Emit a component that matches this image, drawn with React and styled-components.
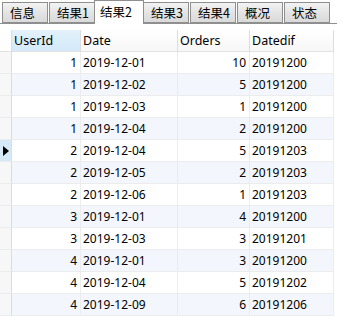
import React from "react";
import styled, { createGlobalStyle } from "styled-components";

const GlobalStyle = createGlobalStyle`
  body {
    margin: 0;
    background: #fff;
    font-family: "Noto Sans", "Noto Sans CJK SC", sans-serif;
  }
`;

const tabs = ["信息", "结果1", "结果2", "结果3", "结果4", "概况", "状态"];

const rows = [
  [1, "2019-12-01", 10, "20191200"],
  [1, "2019-12-02", 5, "20191200"],
  [1, "2019-12-03", 1, "20191200"],
  [1, "2019-12-04", 2, "20191200"],
  [2, "2019-12-04", 5, "20191203"],
  [2, "2019-12-05", 2, "20191203"],
  [2, "2019-12-06", 1, "20191203"],
  [3, "2019-12-01", 4, "20191200"],
  [3, "2019-12-03", 3, "20191201"],
  [4, "2019-12-01", 3, "20191200"],
  [4, "2019-12-04", 5, "20191202"],
  [4, "2019-12-09", 6, "20191206"],
];

const COLS = "12px 69px 97px 72px 84px";

export default function App() {
  return (
    <Page>
      <GlobalStyle />
      <TabBar>
        {tabs.map((t, i) => (
          <Tab key={t} active={i === 2}>
            {t}
          </Tab>
        ))}
      </TabBar>
      <Grid>
        <HeaderRow>
          <Indicator header />
          <HeadCell selected>UserId</HeadCell>
          <HeadCell>Date</HeadCell>
          <HeadCell>Orders</HeadCell>
          <HeadCell>Datedif</HeadCell>
        </HeaderRow>
        {rows.map((r, i) => (
          <Row key={i} alt={i % 2 === 1}>
            <Indicator current={i === 4}>{i === 4 && <Arrow />}</Indicator>
            <Cell right>{r[0]}</Cell>
            <Cell>{r[1]}</Cell>
            <Cell right>{r[2]}</Cell>
            <Cell>{r[3]}</Cell>
          </Row>
        ))}
      </Grid>
    </Page>
  );
}

const Page = styled.div`
  width: 348px;
  height: 323px;
  overflow: hidden;
  background: #fff;
`;

const TabBar = styled.div`
  display: flex;
  align-items: flex-end;
  gap: 1px;
  height: 24px;
  width: 337px;
  padding-left: 2px;
  box-sizing: border-box;
  border-bottom: 1px solid #8f8f8f;
`;

const Tab = styled.div`
  width: ${(p) => (p.active ? "50px" : "46px")};
  height: ${(p) => (p.active ? "24px" : "21px")};
  margin: ${(p) => (p.active ? "0 -2px -1px -2px" : "0")};
  box-sizing: border-box;
  border: 1px solid #8f8f8f;
  border-bottom: ${(p) => (p.active ? "none" : "1px solid #8f8f8f")};
  background: ${(p) =>
    p.active ? "#fff" : "linear-gradient(#f3f3f3, #e4e4e4 50%, #dadada)"};
  position: relative;
  z-index: ${(p) => (p.active ? 1 : 0)};
  font-family: "Noto Sans CJK SC", sans-serif;
  font-size: 12.5px;
  color: #000;
  line-height: 19px;
  padding: ${(p) => (p.active ? "1px 0 0 5px" : "0 0 0 7px")};
`;

const Grid = styled.div`
  margin-top: 6px;
  width: 334px;
  font-size: 12px;
  color: #000;
`;

const HeaderRow = styled.div`
  display: grid;
  grid-template-columns: ${COLS};
  height: 22px;
  font-size: 12.5px;
`;

const Row = styled.div`
  display: grid;
  grid-template-columns: ${COLS};
  height: 22px;
  background: ${(p) => (p.alt ? "#f3f6fc" : "#fff")};
`;

const Indicator = styled.div`
  box-sizing: border-box;
  border-right: 1px solid #dcdcdc;
  border-bottom: 1px solid ${(p) => (p.header ? "#e2e2e2" : "#ececec")};
  background: ${(p) =>
    p.current ? "#d6e9f8" : p.header ? "#fff" : "#f7f7f7"};
  display: flex;
  align-items: center;
  justify-content: center;
`;

const Arrow = styled.span`
  width: 0;
  height: 0;
  border-top: 5px solid transparent;
  border-bottom: 5px solid transparent;
  border-left: 6px solid #000;
  margin-left: 1px;
`;

const HeadCell = styled.div`
  box-sizing: border-box;
  border-right: 1px solid #dcdcdc;
  border-bottom: 1px solid #e2e2e2;
  background: ${(p) =>
    p.selected ? "linear-gradient(#e3f1fb, #d3e9f9)" : "linear-gradient(#fff, #f7f7f7)"};
  padding-left: 2px;
  line-height: 21px;
  white-space: nowrap;
`;

const Cell = styled.div`
  box-sizing: border-box;
  border-right: 1px solid #ececec;
  border-bottom: 1px solid #ececec;
  text-align: ${(p) => (p.right ? "right" : "left")};
  padding: 0 3px 0 2px;
  line-height: 21px;
  white-space: nowrap;
`;
